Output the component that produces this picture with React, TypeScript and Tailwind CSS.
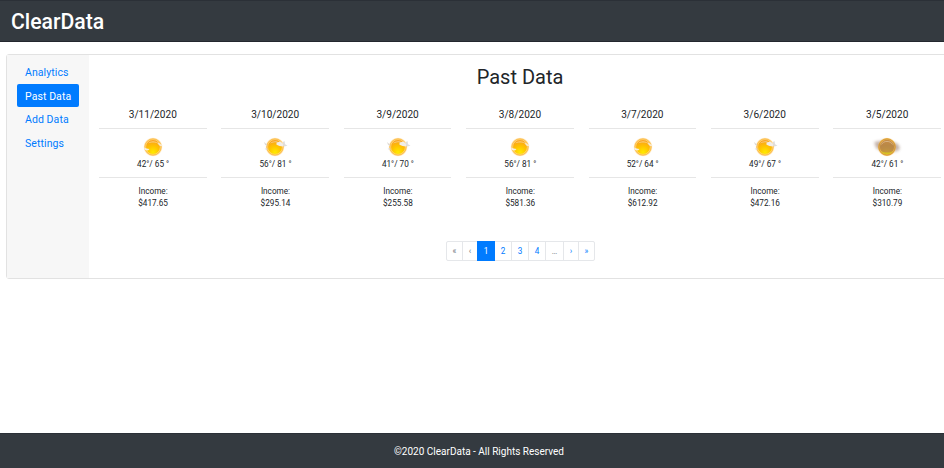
type Sky = "clear" | "breezy" | "hazy";

interface Day {
  date: string;
  temps: string;
  income: string;
  sky: Sky;
}

const days: Day[] = [
  { date: "3/11/2020", temps: '42°/ 65 °', income: "$417.65", sky: "clear" },
  { date: "3/10/2020", temps: '56°/ 81 °', income: "$295.14", sky: "breezy" },
  { date: "3/9/2020", temps: '41°/ 70 °', income: "$255.58", sky: "breezy" },
  { date: "3/8/2020", temps: '56°/ 81 °', income: "$581.36", sky: "clear" },
  { date: "3/7/2020", temps: '52°/ 64 °', income: "$612.92", sky: "clear" },
  { date: "3/6/2020", temps: '49°/ 67 °', income: "$472.16", sky: "breezy" },
  { date: "3/5/2020", temps: '42°/ 61 °', income: "$310.79", sky: "hazy" },
];

const menu = ["Analytics", "Past Data", "Add Data", "Settings"];

const pages = [
  { label: "«", style: "w-[15px] border-[#e5e7ea] text-[#6c757d]" },
  { label: "‹", style: "w-[14px] border-[#e5e7ea] text-[#6c757d]" },
  { label: "1", style: "relative z-10 w-[16px] bg-[#007bff] border-[#007bff] text-white" },
  { label: "2", style: "w-[16px] border-[#e5e7ea] text-[#007bff]" },
  { label: "3", style: "w-[16px] border-[#e5e7ea] text-[#007bff]" },
  { label: "4", style: "w-[16px] border-[#e5e7ea] text-[#007bff]" },
  { label: "…", style: "w-[17px] border-[#e5e7ea] text-[#6c757d]" },
  { label: "›", style: "w-[14px] border-[#e5e7ea] text-[#007bff]" },
  { label: "»", style: "w-[15px] border-[#e5e7ea] text-[#007bff]" },
];

function SkyIcon({ sky }: { sky: Sky }) {
  return (
    <svg width="32" height="22" viewBox="0 0 32 22" className="block">
      <defs>
        <radialGradient id="sun" cx="0.5" cy="0.85" r="0.8">
          <stop offset="0" stopColor="#ffea00" />
          <stop offset="0.5" stopColor="#ffc400" />
          <stop offset="1" stopColor="#fb9f1c" />
        </radialGradient>
        <radialGradient id="glow">
          <stop offset="0.78" stopColor="#ffb73d" stopOpacity="0.8" />
          <stop offset="1" stopColor="#ffd98c" stopOpacity="0" />
        </radialGradient>
        <filter id="soft" x="-30%" y="-50%" width="160%" height="200%">
          <feGaussianBlur stdDeviation="0.4" />
        </filter>
        <filter id="haze" x="-30%" y="-50%" width="160%" height="200%">
          <feGaussianBlur stdDeviation="1.4" />
        </filter>
      </defs>
      {sky === "hazy" && (
        <path d="M3 6 L14 4 L27 8 L29 12 L27 15 L14 17 L5 12Z" fill="#96796b" opacity="0.5" filter="url(#haze)" />
      )}
      <circle cx="16" cy="11" r="9.8" fill="url(#glow)" />
      <circle cx="16" cy="11" r="7.4" fill="url(#sun)" stroke="#ffe08a" strokeWidth="0.7" />
      <circle cx="16" cy="11" r="8.2" fill="none" stroke="#fdb93c" strokeWidth="0.8" />
      {sky === "clear" && (
        <g fill="#f6efe2" filter="url(#soft)">
          <path d="M11 7.5 C13 4.6 19 4.6 21 7.5 C18.5 6.3 13.5 6.3 11 7.5Z" opacity="0.5" />
          <path d="M7 11.5 L9.5 12.5 L12.5 13 L11 14.5 L8 14Z" />
          <path d="M20 6.5 L22.5 7.5 L26 9.8 L23 10 L21.5 8.5Z" opacity="0.9" />
        </g>
      )}
      {sky === "breezy" && (
        <g fill="#f1ede6" filter="url(#soft)">
          <path d="M11 7.5 C13 4.6 18 4.6 20 6.5 C18 6 13.5 6.3 11 7.5Z" opacity="0.5" />
          <path d="M17.5 6.5 L21.5 5.5 L24.5 8 L24 10.5 L20.5 10 L17.5 8.8Z" />
          <path d="M24 6 L25.5 5 L26 8.3 L28.5 9.5 L25.5 10.5 L24 9.5Z" fill="#e0dedb" />
          <path d="M5 6 L8 8.5 L8 10 L6 8.8Z M5.5 13 L8 12 L8.5 14Z" fill="#dedad5" />
        </g>
      )}
      {sky === "hazy" && (
        <g>
          <circle cx="16" cy="11" r="7.2" fill="#b58350" opacity="0.8" />
          <circle cx="16" cy="11" r="8" fill="none" stroke="#d9a040" strokeWidth="1.3" />
          <path d="M10.2 15 C13 17 19 17 21.8 15 C19.5 19.3 12.5 19.3 10.2 15Z" fill="#d8c41f" filter="url(#soft)" />
          <path d="M10.5 8.5 C12.5 4.4 19.5 4.4 21.5 8.5" fill="none" stroke="#ecd8b5" strokeWidth="0.8" opacity="0.7" />
          <path d="M5 7 L24 7 L28 12 L20 14 L8 13Z" fill="#957362" opacity="0.2" filter="url(#haze)" />
        </g>
      )}
    </svg>
  );
}

function DayColumn({ day }: { day: Day }) {
  return (
    <section className="w-[107.6px] shrink-0 text-center text-[8.2px] leading-3 text-[#212529]">
      <h3 className="h-[27px] border-b border-[#e6e6e6] text-[10.1px] leading-[26px]">{day.date}</h3>
      <div className="flex h-[49px] flex-col items-center border-b border-[#e6e6e6] pl-[0.6px] pt-[7px]">
        <SkyIcon sky={day.sky} />
        <p>{day.temps}</p>
      </div>
      <div className="pl-[0.6px] pt-[7px]">
        <p>Income:</p>
        <p>{day.income}</p>
      </div>
    </section>
  );
}

export default function App() {
  return (
    <div className="flex h-[468px] w-full flex-col overflow-hidden bg-white font-[Roboto,sans-serif]">
      <header className="flex h-[42px] shrink-0 items-center border-y border-t-[#2b3037] border-b-[#23272e] bg-[#343a40] px-[11px] pt-px">
        <h1 className="text-[21.2px] font-medium leading-6 text-white">ClearData</h1>
      </header>
      <main className="flex-1 pl-1.5 pt-3">
        <div className="flex h-[225px] w-[946px] rounded-[3px] border border-[#e2e2e2]">
          <nav className="w-[82px] shrink-0 bg-[#f7f7f7] pl-2.5 pt-[5.3px]">
            {menu.map((item) => (
              <a
                key={item}
                className={`block h-[23.5px] w-[62px] whitespace-nowrap rounded-[2px] pl-2 text-[10.5px] leading-[25px] tracking-[0.08px] ${
                  item === "Past Data" ? "bg-[#007bff] text-white" : "text-[#007bff]"
                }`}
              >
                {item}
              </a>
            ))}
          </nav>
          <div className="w-[862px] shrink-0 pl-2.5">
            <h2 className="pr-2.5 pt-2.5 text-center text-[20px] leading-6 text-[#212529]">Past Data</h2>
            <div className="mt-[13px] flex gap-[14.8px]">
              {days.map((day) => (
                <DayColumn key={day.date} day={day} />
              ))}
            </div>
            <div className="mt-8 flex justify-center pr-2">
              {pages.map((page) => (
                <a
                  key={page.label}
                  className={`-ml-px box-content flex h-[18px] items-center justify-center border text-[8.2px] first:rounded-l-[2px] last:rounded-r-[2px] ${page.style}`}
                >
                  {page.label}
                </a>
              ))}
            </div>
          </div>
        </div>
      </main>
      <footer className="flex h-[35px] shrink-0 items-center justify-center border-t border-[#2b3037] bg-[#343a40] pl-[14px] text-[10px] text-white">
        ©2020 ClearData - All Rights Reserved
      </footer>
    </div>
  );
}
